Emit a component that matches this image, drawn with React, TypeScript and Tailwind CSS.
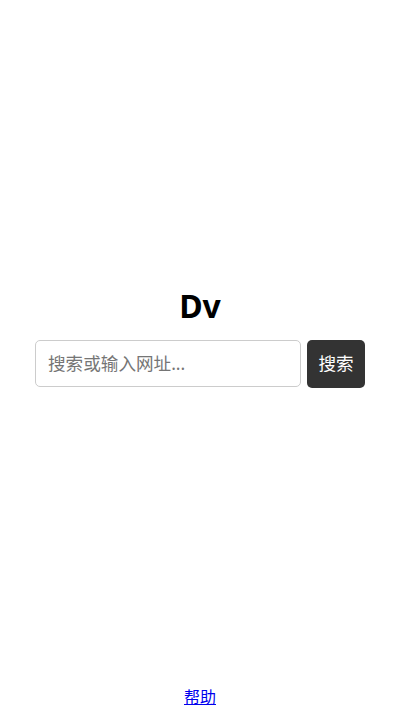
import { useState } from "react";

const font = { fontFamily: '"Noto Sans", "Noto Sans CJK SC", sans-serif' };

export default function App() {
  const [query, setQuery] = useState("");

  return (
    <div className="flex min-h-screen flex-col bg-white" style={font}>
      <main className="flex flex-1 flex-col items-center justify-center px-[35px]">
        <h1 className="mb-[14px] text-[32px] font-bold leading-[40px] text-black">Dv</h1>
        <form className="flex w-full gap-[6px]" onSubmit={(e) => e.preventDefault()}>
          <input
            value={query}
            onChange={(e) => setQuery(e.target.value)}
            placeholder="搜索或输入网址..."
            className="h-[47px] min-w-0 flex-1 rounded-[5px] border border-[#ccc] px-3 text-[17.6px] text-[#333] outline-none placeholder:text-[#757575]"
          />
          <button
            type="submit"
            className="h-[48px] w-[58px] shrink-0 rounded-[5px] bg-[#333] text-[17.6px] text-white"
          >
            搜索
          </button>
        </form>
      </main>
      <footer className="flex justify-center pb-[1px] pt-3">
        <a href="#" className="text-[16px] leading-[24px] text-[#0000ee] underline">
          帮助
        </a>
      </footer>
    </div>
  );
}
